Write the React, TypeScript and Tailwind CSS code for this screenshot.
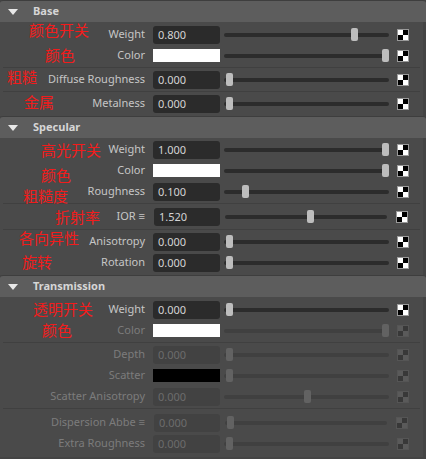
import React from 'react';

type Row = {
  label: string;
  kind?: 'num' | 'swatch';
  value?: string;
  swatch?: string;
  t?: number;
  dim?: boolean;
  ior?: boolean;
};

type Group = { rows: Row[]; pad?: string };

type Section = { title: string; groups: Group[] };

const sections: Section[] = [
  {
    title: 'Base',
    groups: [
      {
        rows: [
          { label: 'Weight', value: '0.800', t: 0.8 },
          { label: 'Color', kind: 'swatch', swatch: 'bg-white', t: 1 },
        ],
        pad: 'pt-[2px] pb-px',
      },
      { rows: [{ label: 'Diffuse Roughness', value: '0.000', t: 0 }] },
      { rows: [{ label: 'Metalness', value: '0.000', t: 0 }] },
    ],
  },
  {
    title: 'Specular',
    groups: [
      {
        rows: [
          { label: 'Weight', value: '1.000', t: 1 },
          { label: 'Color', kind: 'swatch', swatch: 'bg-white', t: 1 },
          { label: 'Roughness', value: '0.100', t: 0.1 },
        ],
      },
      { rows: [{ label: 'IOR ≡', value: '1.520', t: 0.52, ior: true }], pad: 'py-[2px]' },
      {
        rows: [
          { label: 'Anisotropy', value: '0.000', t: 0 },
          { label: 'Rotation', value: '0.000', t: 0 },
        ],
      },
    ],
  },
  {
    title: 'Transmission',
    groups: [
      {
        rows: [
          { label: 'Weight', value: '0.000', t: 0 },
          { label: 'Color', kind: 'swatch', swatch: 'bg-white', t: 1, dim: true },
        ],
        pad: 'pt-[2px] pb-px',
      },
      {
        rows: [
          { label: 'Depth', value: '0.000', t: 0, dim: true },
          { label: 'Scatter', kind: 'swatch', swatch: 'bg-black', t: 0, dim: true },
          { label: 'Scatter Anisotropy', value: '0.000', t: 0.5, dim: true },
        ],
      },
      {
        rows: [
          { label: 'Dispersion Abbe ≡', value: '0.000', t: 0, dim: true, ior: true },
          { label: 'Extra Roughness', value: '0.000', t: 0, dim: true },
        ],
        pad: 'pt-[3px] pb-[2px]',
      },
    ],
  },
];

// red notes written on top of the screenshot
const notes = [
  { text: '颜色开关', left: 29, top: 22 },
  { text: '颜色', left: 45, top: 47 },
  { text: '粗糙', left: 7, top: 69 },
  { text: '金属', left: 24, top: 94 },
  { text: '高光开关', left: 41, top: 142 },
  { text: '颜色', left: 41, top: 167 },
  { text: '粗糙度', left: 23, top: 188 },
  { text: '折射率', left: 55, top: 209 },
  { text: '各向异性', left: 19, top: 230 },
  { text: '旋转', left: 22, top: 254 },
  { text: '透明开关', left: 33, top: 301 },
  { text: '颜色', left: 42, top: 322 },
];

const Checker = ({ dim }: { dim?: boolean }) => (
  <div
    className={`grid grid-cols-2 grid-rows-2 w-[12px] h-[12px] border ${
      dim ? 'border-[#555]' : 'border-[#9a9a9a]'
    }`}
  >
    <div className={dim ? 'bg-[#5a5a5a]' : 'bg-white'} />
    <div className={dim ? 'bg-[#383838]' : 'bg-black'} />
    <div className={dim ? 'bg-[#383838]' : 'bg-black'} />
    <div className={dim ? 'bg-[#5a5a5a]' : 'bg-white'} />
  </div>
);

const PropRow = ({ row }: { row: Row }) => {
  const dim = row.dim;
  const t = row.t ?? 0;
  return (
    <div className="flex items-center h-[21px]">
      <div
        className={`w-[145px] shrink-0 text-right whitespace-nowrap ${
          dim ? 'text-[#7c7c7c]' : 'text-[#c6c6c6]'
        }`}
      >
        {row.label}
      </div>
      {row.kind === 'swatch' ? (
        <div className={`ml-[8px] w-[67px] h-[13px] shrink-0 ${row.swatch}`} />
      ) : (
        <div
          className={`${row.ior ? 'ml-[9px] w-[66px]' : 'ml-[8px] w-[67px]'} h-[18px] shrink-0 rounded-[3px] pl-[5px] leading-[18px] ${
            dim ? 'bg-[#424242] text-[#6c6c6c]' : 'bg-[#2b2b2b] text-[#d4d4d4]'
          }`}
        >
          {row.value}
        </div>
      )}
      <div
        className={`relative flex items-center h-[13px] shrink-0 ${
          row.ior ? 'ml-[5px] w-[162px]' : 'ml-[4px] w-[165px]'
        }`}
      >
        <div className={`w-full h-[4px] rounded-full ${dim ? 'bg-[#404040]' : 'bg-[#2c2c2c]'}`} />
        <div
          className={`absolute top-0 w-[7px] h-[13px] rounded-[2px] ${dim ? 'bg-[#626262]' : 'bg-[#bdbdbd]'}`}
          style={{ left: 2 + t * (row.ior ? 153 : 156) }}
        />
      </div>
      <div className={row.ior ? 'ml-[9px]' : 'ml-[8px]'}>
        <Checker dim={dim} />
      </div>
    </div>
  );
};

export default function App() {
  return (
    <div className="relative w-[426px] h-[459px] overflow-hidden bg-[#444444] text-[11px] font-['Noto_Sans',sans-serif]">
      {sections.map((s) => (
        <div key={s.title}>
          <div className="flex items-center h-[22px] bg-[#5d5d5d] border-t border-[#3e3e3e] rounded-t-[3px]">
            <svg width="10" height="6" viewBox="0 0 10 6" className="ml-[8px]">
              <path d="M0 0h10L5 6z" fill="#e8e8e8" />
            </svg>
            <span className="ml-[15px] font-bold text-[#d6d6d6]">{s.title}</span>
          </div>
          <div className="bg-[#4a4a4a] mr-[3px] pb-px">
            {s.groups.map((g, gi) => (
              <div
                key={gi}
                className={`${g.pad ?? 'py-px'} ${gi > 0 ? 'border-t border-[#404040] mx-[3px]' : ''}`}
              >
                <div className={gi > 0 ? '-mx-[3px]' : ''}>
                  {g.rows.map((r) => (
                    <PropRow key={r.label} row={r} />
                  ))}
                </div>
              </div>
            ))}
          </div>
        </div>
      ))}
      {notes.map((n, i) => (
        <span
          key={i}
          className="absolute text-[15px] leading-none text-[#f21c1c] font-['Noto_Sans_CJK_SC',sans-serif] whitespace-nowrap"
          style={{ left: n.left, top: n.top }}
        >
          {n.text}
        </span>
      ))}
    </div>
  );
}
